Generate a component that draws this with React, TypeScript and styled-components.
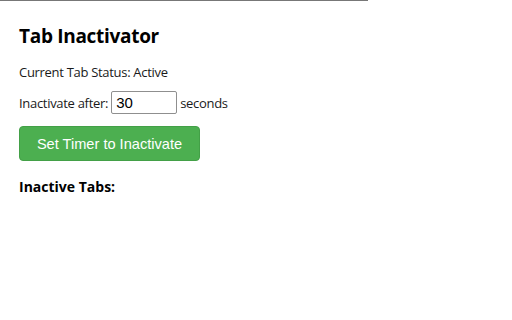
import React from 'react';
import styled, { createGlobalStyle } from 'styled-components';

const GlobalStyle = createGlobalStyle`
    html, body {
        margin: 0;
        padding: 0;
        background: #ffffff;
    }
    body {
        font-family: "Open Sans", "Noto Sans", sans-serif;
        color: #000;
    }
`;

const App = () => {
    return (
        <>
            <GlobalStyle />
            <Popup>
                <Title>Tab Inactivator</Title>
                <Status>Current Tab Status: Active</Status>
                <Row>
                    <label htmlFor="minutes">Inactivate after:</label>
                    <SecondsInput id="minutes" type="number" defaultValue={30} />
                    <span>seconds</span>
                </Row>
                <TimerButton>Set Timer to Inactivate</TimerButton>
                <SectionTitle>Inactive Tabs:</SectionTitle>
            </Popup>
        </>
    );
};

const Popup = styled.main`
    width: 368px;
    box-sizing: border-box;
    border-top: 1px solid #777;
    padding: 22px 19px 20px;
    display: flex;
    flex-direction: column;
    align-items: flex-start;
`;

const Title = styled.h1`
    margin: 0 0 14px;
    font-size: 19px;
    font-weight: 700;
    letter-spacing: -0.3px;
`;

const Status = styled.p`
    margin: 0 0 10px;
    font-size: 13px;
    letter-spacing: -0.3px;
    color: #1a1a1a;
`;

const Row = styled.div`
    display: flex;
    align-items: center;
    gap: 3px;
    font-size: 13px;
    letter-spacing: -0.3px;
    color: #1a1a1a;
    margin-bottom: 12px;
`;

const SecondsInput = styled.input`
    width: 66px;
    height: 23px;
    box-sizing: border-box;
    border: 1px solid #8f8f8f;
    border-radius: 2px;
    padding: 1px 4px;
    font-family: "Liberation Sans", Arial, sans-serif;
    font-size: 15px;
    color: #000;
    -moz-appearance: textfield;
    &::-webkit-inner-spin-button,
    &::-webkit-outer-spin-button {
        -webkit-appearance: none;
        margin: 0;
    }
`;

const TimerButton = styled.button`
    width: 181px;
    height: 35px;
    background: #4caf50;
    color: #fff;
    border: 1px solid #43a047;
    border-radius: 4px;
    font-family: "Liberation Sans", Arial, sans-serif;
    font-size: 14.6px;
    cursor: pointer;
    margin-bottom: 16px;
`;

const SectionTitle = styled.h3`
    margin: 0;
    font-size: 14px;
    font-weight: 700;
`;

export default App;
